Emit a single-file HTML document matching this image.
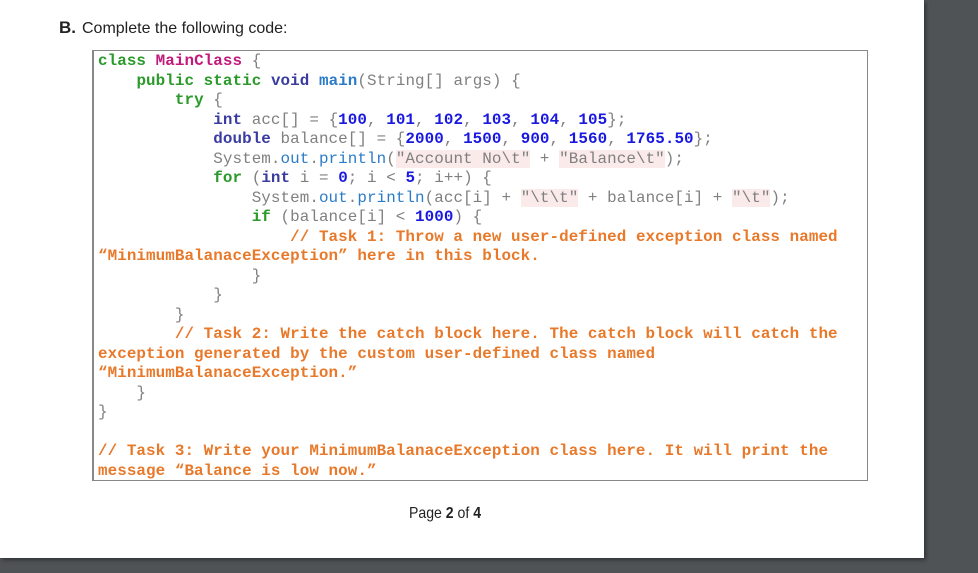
<!DOCTYPE html>
<html><head><style>
body{margin:0;width:978px;height:573px;background:#505356;position:relative;overflow:hidden}
.page{position:absolute;left:0;top:0;width:924px;height:558px;background:#fff;box-shadow:2px 2px 4px rgba(0,0,0,.4)}
.title{position:absolute;left:59px;top:18px;font:16px "Liberation Sans",sans-serif;color:#222}
.title b{font-size:17px;margin-right:6px}
.box{position:absolute;left:92px;top:50px;width:773px;height:429px;border:1px solid #888;border-left:2px solid #888}
pre{position:absolute;left:98px;top:52px;margin:0;font:15.9px/19.5px "Liberation Mono",monospace;letter-spacing:0.07px;color:#808080}
.k{color:#2a9a2a;font-weight:bold}.c{color:#c2187c;font-weight:bold}.t{color:#3a3ca0;font-weight:bold}
.m{color:#2b7cc8}.mb{color:#2b7cc8;font-weight:bold}.n{color:#1818e0;font-weight:bold}
.s{background:#fbeaea;color:#808080}.o{color:#e8792a;font-weight:bold}
.pg{position:absolute;left:409px;top:505px;font:16px "Liberation Sans",sans-serif;color:#222;transform:scaleX(.88);transform-origin:left}
</style></head><body><div class="page">
<div class="title"><b>B.</b>Complete the following code:</div>
<div class="box"></div>
<pre><span class="k">class</span> <span class="c">MainClass</span> {
    <span class="k">public static</span> <span class="t">void</span> <span class="mb">main</span>(String[] args) {
        <span class="k">try</span> {
            <span class="t">int</span> acc[] = {<span class="n">100</span>, <span class="n">101</span>, <span class="n">102</span>, <span class="n">103</span>, <span class="n">104</span>, <span class="n">105</span>};
            <span class="t">double</span> balance[] = {<span class="n">2000</span>, <span class="n">1500</span>, <span class="n">900</span>, <span class="n">1560</span>, <span class="n">1765.50</span>};
            System.<span class="m">out</span>.<span class="m">println</span>(<span class="s">"Account No\t"</span> + <span class="s">"Balance\t"</span>);
            <span class="k">for</span> (<span class="t">int</span> i = <span class="n">0</span>; i &lt; <span class="n">5</span>; i++) {
                System.<span class="m">out</span>.<span class="m">println</span>(acc[i] + <span class="s">"\t\t"</span> + balance[i] + <span class="s">"\t"</span>);
                <span class="k">if</span> (balance[i] &lt; <span class="n">1000</span>) {
                    <span class="o">// Task 1: Throw a new user-defined exception class named</span>
<span class="o">“MinimumBalanaceException” here in this block.</span>
                }
            }
        }
        <span class="o">// Task 2: Write the catch block here. The catch block will catch the</span>
<span class="o">exception generated by the custom user-defined class named</span>
<span class="o">“MinimumBalanaceException.”</span>
    }
}

<span class="o">// Task 3: Write your MinimumBalanaceException class here. It will print the</span>
<span class="o">message “Balance is low now.”</span></pre>
<div class="pg">Page <b>2</b> of <b>4</b></div>
</div></body></html>
